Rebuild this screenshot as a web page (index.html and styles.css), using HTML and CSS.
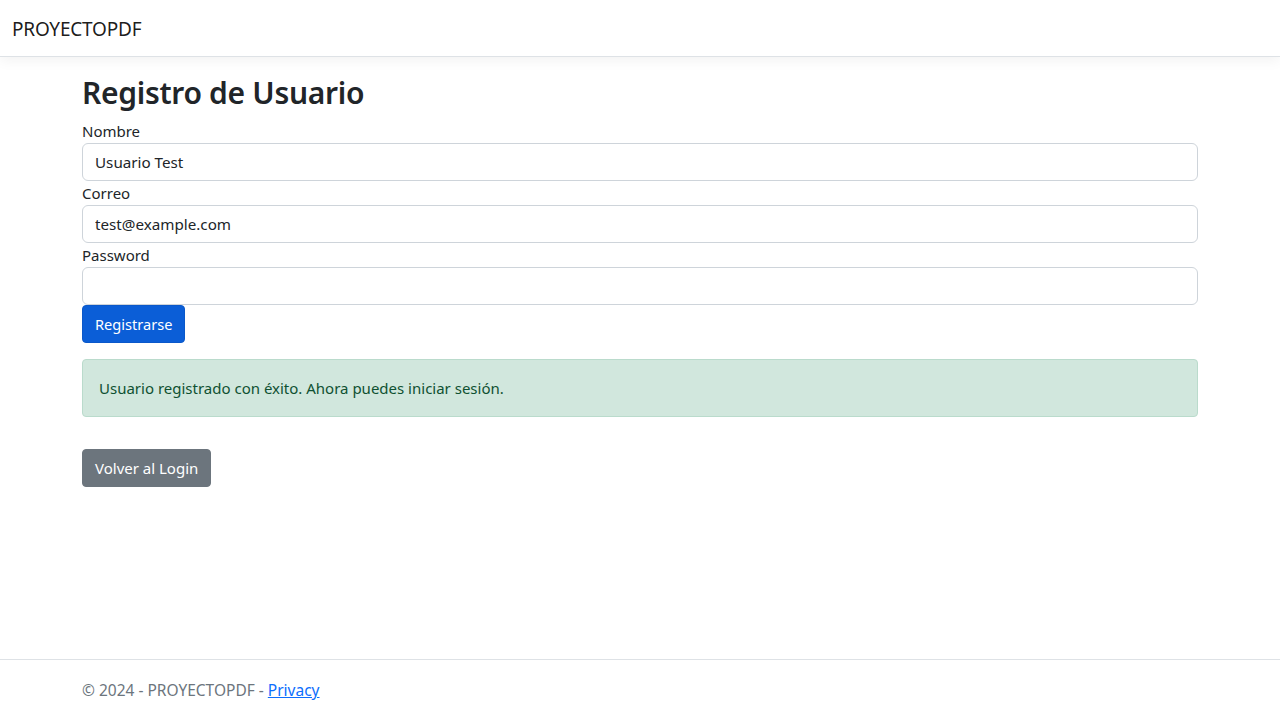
FILE: index.html
```html
<!DOCTYPE html>
<html lang="es">
<head>
<meta charset="utf-8">
<title>Registro de Usuario - PROYECTOPDF</title>
<link rel="stylesheet" href="styles.css">
</head>
<body>
<header class="navbar">
  <div class="navbar-inner">
    <a class="brand" href="#">PROYECTOPDF</a>
  </div>
</header>
<main class="container">
  <h2 class="title">Registro de Usuario</h2>
  <form class="form">
    <div class="field">
      <label class="label" for="nombre">Nombre</label>
      <input class="input" id="nombre" type="text" value="Usuario Test">
    </div>
    <div class="field">
      <label class="label" for="correo">Correo</label>
      <input class="input" id="correo" type="email" value="test@example.com">
    </div>
    <div class="field">
      <label class="label" for="password">Password</label>
      <input class="input" id="password" type="password">
    </div>
    <div class="actions">
      <button class="btn btn-primary" type="button">Registrarse</button>
    </div>
  </form>
  <div class="alert">Usuario registrado con éxito. Ahora puedes iniciar sesión.</div>
  <a class="btn btn-secondary" href="#">Volver al Login</a>
</main>
<footer class="footer">
  <div class="container footer-inner">© 2024 - PROYECTOPDF - <a class="footer-link" href="#">Privacy</a></div>
</footer>
</body>
</html>
```
FILE: styles.css
```css
* { box-sizing: border-box; }
html, body { margin: 0; padding: 0; }
body {
  font-family: "Noto Sans", "Open Sans", "Liberation Sans", sans-serif;
  font-size: 15px;
  line-height: 1.5;
  color: #212529;
  background: #fff;
  min-height: 100vh;
  display: flex;
  flex-direction: column;
}
.navbar {
  background: #fff;
  border-bottom: 1px solid #dee2e6;
  box-shadow: 0 4px 12px rgba(0,0,0,.05);
  margin-bottom: 16px;
}
.navbar-inner {
  height: 56px;
  padding: 0 12px;
  display: flex;
  align-items: center;
}
.brand {
  font-size: 19px;
  color: rgba(0,0,0,.9);
  text-decoration: none;
  line-height: 30px;
  letter-spacing: -0.2px;
  padding-top: 2px;
}
.container {
  width: 1140px;
  margin: 0 auto;
  padding: 0 12px;
}
main.container { flex: 1; }
.title {
  font-size: 30px;
  font-weight: 600;
  line-height: 40px;
  height: 38.4px;
  margin: 0 0 8px;
  letter-spacing: -0.3px;
}
.form { display: flex; flex-direction: column; }
.label { display: block; line-height: 24px; font-size: 15px; }
.input {
  display: block;
  width: 100%;
  height: 38px;
  padding: 6px 12px;
  font: inherit;
  font-size: 15.2px;
  color: #212529;
  border: 1px solid #ced4da;
  border-radius: 6px;
  background: #fff;
}
.actions { display: flex; }
.btn {
  display: inline-block;
  height: 38px;
  padding: 6px 12px;
  font: inherit;
  font-size: 15px;
  line-height: 24px;
  border: 1px solid transparent;
  border-radius: 4px;
  color: #fff;
  text-decoration: none;
  cursor: pointer;
}
.btn-primary { background: #0b5ed7; border-color: #0a58ca; font-size: 14.6px; }
.btn-secondary { background: #6c757d; border-color: #6c757d; }
.alert {
  margin: 16px 0 32px;
  padding: 16px;
  border: 1px solid #badbcc;
  border-radius: 4px;
  background: #d1e7dd;
  color: #0f5132;
  font-size: 15px;
  line-height: 24px;
}
.footer {
  border-top: 1px solid #dee2e6;
  color: #6c757d;
  line-height: 60px;
  white-space: nowrap;
}
.footer-inner { font-size: 15.5px; }
.footer-link { color: #0d6efd; text-decoration: underline; }
```
